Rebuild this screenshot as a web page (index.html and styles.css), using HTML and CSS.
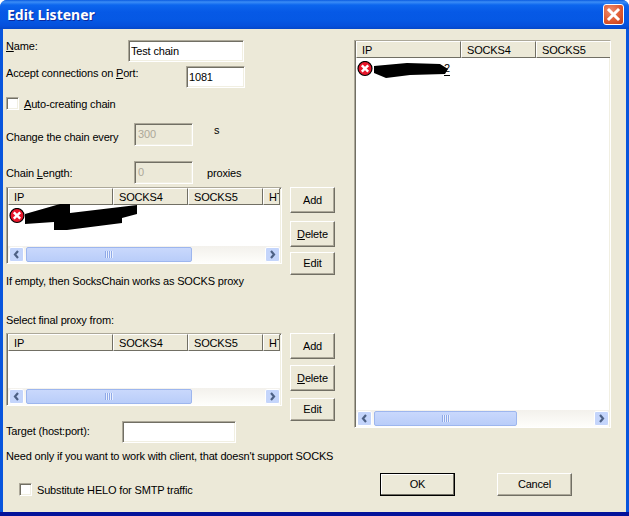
FILE: index.html
```html
<!DOCTYPE html>
<html lang="en">
<head>
<meta charset="utf-8">
<title>Edit Listener</title>
<link rel="stylesheet" href="styles.css">
</head>
<body>
<div class="window">
  <div class="titlebar">
    <span class="title">Edit Listener</span>
    <span class="close"><svg width="21" height="21" viewBox="0 0 21 21"><path d="M6 6l9 9M15 6l-9 9" stroke="#fff" stroke-width="3" stroke-linecap="square" fill="none"/></svg></span>
  </div>
  <div class="client">
    <div class="left">
      <div class="row row-name"><label class="lbl lbl-name"><u>N</u>ame:</label><div class="field field-name">Test chain</div></div>
      <div class="row row-port"><label class="lbl lbl-port"><span>Accept connections on <u>P</u>ort:</span></label><div class="field field-port">1081</div></div>
      <div class="row row-auto"><span class="check"></span><label class="lbl check-label"><u>A</u>uto-creating chain</label></div>
      <div class="row row-change"><label class="lbl lbl-opt lbl-low">Change the chain every</label><div class="field field-off">300</div><span class="unit unit-s">s</span></div>
      <div class="row row-length"><label class="lbl lbl-opt lbl-mid">Chain <u>L</u>ength:</label><div class="field field-off">0</div><span class="unit unit-p">proxies</span></div>

      <div class="row list-row">
        <div class="list list-small">
          <div class="head">
            <span class="col col-ip">IP</span><span class="col col-s">SOCKS4</span><span class="col col-s">SOCKS5</span><span class="col col-h">HT</span>
          </div>
          <div class="rows">
            <svg class="err" width="16" height="16" viewBox="0 0 16 16"><circle cx="8" cy="7.500" r="7" fill="#e8172b" stroke="#000" stroke-width="1.200"/><path d="M4.800 4.300l6.400 6.400M11.200 4.300l-6.400 6.400" stroke="#fff" stroke-width="2.400" fill="none"/></svg>
          </div>
          <svg class="scrawl scrawl-a" width="116" height="28" viewBox="0 0 116 28"><path d="M1 11 36 1h10v9L113 2v9L98 15v5L43 27H30v-8L1 21z" fill="#000"/></svg>
          <div class="hscroll">
            <span class="arrow"><svg width="15" height="15" viewBox="0 0 15 15"><path d="M9 4 6 7.500l3 3.500" stroke="#4d6185" stroke-width="2.200" fill="none"/></svg></span>
            <span class="thumb thumb-small"><i></i></span>
            <span class="track"></span>
            <span class="arrow"><svg width="15" height="15" viewBox="0 0 15 15"><path d="M6 4l3 3.500L6 11" stroke="#4d6185" stroke-width="2.200" fill="none"/></svg></span>
          </div>
        </div>
        <div class="btns">
          <button class="btn btn-tall">Add</button>
          <button class="btn btn-tall btn-delete"><u>D</u>elete</button>
          <button class="btn btn-edit">Edit</button>
        </div>
      </div>
      <p class="note note-empty">If empty, then SocksChain works as SOCKS proxy</p>
      <p class="note note-select">Select final proxy from:</p>

      <div class="row list-row list-row-final">
        <div class="list list-final">
          <div class="head">
            <span class="col col-ip">IP</span><span class="col col-s">SOCKS4</span><span class="col col-s">SOCKS5</span><span class="col col-h">HT</span>
          </div>
          <div class="rows"></div>
          <div class="hscroll">
            <span class="arrow"><svg width="15" height="15" viewBox="0 0 15 15"><path d="M9 4 6 7.500l3 3.500" stroke="#4d6185" stroke-width="2.200" fill="none"/></svg></span>
            <span class="thumb thumb-small"><i></i></span>
            <span class="track"></span>
            <span class="arrow"><svg width="15" height="15" viewBox="0 0 15 15"><path d="M6 4l3 3.500L6 11" stroke="#4d6185" stroke-width="2.200" fill="none"/></svg></span>
          </div>
        </div>
        <div class="btns btns-final">
          <button class="btn btn-add-final">Add</button>
          <button class="btn btn-tall btn-delete-final"><u>D</u>elete</button>
          <button class="btn btn-edit btn-edit-final">Edit</button>
        </div>
      </div>

      <div class="row row-target"><label class="lbl lbl-target">Target (host:port):</label><div class="field field-target"></div></div>
      <p class="note note-need">Need only if you want to work with client, that doesn't support SOCKS</p>
      <div class="row row-helo"><span class="check"></span><label class="lbl helo-label">Substitute HELO for SMTP traffic</label></div>
    </div>

    <div class="right">
      <div class="list list-big">
        <div class="head">
          <span class="col col-ip">IP</span><span class="col col-s">SOCKS4</span><span class="col col-s">SOCKS5</span>
        </div>
        <div class="rows rows-big">
          <svg class="err" width="16" height="16" viewBox="0 0 16 16"><circle cx="8" cy="7.500" r="7" fill="#e8172b" stroke="#000" stroke-width="1.200"/><path d="M4.800 4.300l6.400 6.400M11.200 4.300l-6.400 6.400" stroke="#fff" stroke-width="2.400" fill="none"/></svg>
          <span class="cell-tail">2</span>
        </div>
        <svg class="scrawl scrawl-b" width="76" height="16" viewBox="0 0 76 16"><path d="M1 4 34 1l33 1 8 5-3 5-35 1-24 3-12-5z" fill="#000"/></svg>
        <div class="hscroll">
          <span class="arrow"><svg width="15" height="15" viewBox="0 0 15 15"><path d="M9 4 6 7.500l3 3.500" stroke="#4d6185" stroke-width="2.200" fill="none"/></svg></span>
          <span class="thumb thumb-big"><i></i></span>
          <span class="track"></span>
          <span class="arrow"><svg width="15" height="15" viewBox="0 0 15 15"><path d="M6 4l3 3.500L6 11" stroke="#4d6185" stroke-width="2.200" fill="none"/></svg></span>
        </div>
      </div>
      <div class="footer">
        <button class="btn btn-foot btn-default">OK</button>
        <button class="btn btn-foot">Cancel</button>
      </div>
    </div>
  </div>
</div>
</body>
</html>
```

FILE: styles.css
```css
* { box-sizing: border-box; }
html, body { margin: 0; padding: 0; }
body { width: 629px; height: 516px; background: #fff; overflow: hidden; font: 11px/13px "Liberation Sans", Arial, sans-serif; letter-spacing: -.17px; color: #000; }
u { text-decoration: underline; }
p { margin: 0; }

.window { width: 629px; height: 516px; display: flex; flex-direction: column; border-radius: 7px 7px 0 0; overflow: hidden; background: #0855dd; border-bottom: 4px solid #04129a; }
.titlebar { height: 29px; flex: none; display: flex; align-items: center; justify-content: space-between; padding: 0 5px 0 7px; background: linear-gradient(#0a5be0 0, #3b8df6 2px, #0c66ee 5px, #0659e6 12px, #0558e4 20px, #0550dc 26px, #0447c8 29px); }
.title { font: bold 14px/16px "Noto Sans", sans-serif; letter-spacing: 0; color: #fff; text-shadow: 1px 1px 0 #0d2a9c; }
.close { width: 21px; height: 21px; border: 1px solid #fff; border-radius: 3px; background: radial-gradient(circle at 35% 30%, #ef8d6f, #df5a32 55%, #c23a17); display: block; }
.close svg { display: block; margin: -1px; }

.client { flex: 1; display: flex; background: #ece9d8; margin: 0 3px; }
.left { width: 332px; flex: none; padding-left: 3px; }
.right { flex: 1; padding: 11px 0 0 19px; }

.row { display: flex; }
.lbl { display: block; flex: none; white-space: nowrap; }
.field { flex: none; height: 22px; background: #fff; border: 1px solid; border-color: #aca899 #fff #fff #aca899; box-shadow: inset 1px 1px 0 #716f64, inset -1px -1px 0 #f1efe2; padding: 3px 0 0 2px; line-height: 14px; }

.row-name { margin-top: 11px; height: 22px; }
.lbl-name { width: 122px; }
.field-name { width: 116px; }
.row-port { margin-top: 4px; height: 22px; }
.lbl-port { width: 180px; padding-top: 1px; }
.field-port { width: 59px; }
.row-auto { margin-top: 9px; height: 13px; }
.check { flex: none; width: 13px; height: 13px; background: #fff; border: 1px solid; border-color: #aca899 #fff #fff #aca899; box-shadow: inset 1px 1px 0 #716f64, inset -1px -1px 0 #f1efe2; }
.check-label { margin-left: 5px; padding-top: 1px; }

.row-change { margin-top: 13px; height: 23px; }
.row-length { margin-top: 15px; height: 23px; }
.lbl-opt { width: 128px; }
.lbl-low { padding-top: 8px; }
.lbl-mid { padding-top: 6px; }
.field-off { width: 59px; height: 23px; padding-left: 3px; background: #ece9d8; color: #aca899; }
.unit { flex: none; }
.unit-s { margin-left: 21px; padding-top: 1px; }
.unit-p { margin-left: 14px; padding-top: 6px; }

.list-row { margin-top: 3px; height: 88px; gap: 8px; align-items: flex-start; }
.list { position: relative; flex: none; background: #fff; border: 1px solid; border-color: #aca899 #fff #fff #aca899; box-shadow: inset 1px 1px 0 #716f64, inset -1px -1px 0 #f1efe2; padding: 0 1px; display: flex; flex-direction: column; overflow: hidden; }
.list-small { width: 276px; height: 77px; }
.list-final { width: 276px; height: 73px; }
.list-big { width: 257px; height: 388px; }

.head { flex: none; height: 17px; display: flex; }
.col { flex: none; height: 17px; padding: 2px 0 0 5px; background: #ece9d8; border: 1px solid; border-color: #fff #716f64 #716f64 #fff; white-space: nowrap; overflow: hidden; }
.col-ip { width: 105px; }
.col-s { width: 75px; }
.col-h { flex: 1; }
.rows { flex: 1; min-height: 0; padding: 3px 0 0 1px; display: flex; }
.err { flex: none; display: block; }
.cell-tail { margin-left: 71px; padding-top: 1px; border-bottom: 1px solid #000; height: 15px; }

.scrawl { position: absolute; }
.scrawl-a { left: 17px; top: 15px; }
.scrawl-b { left: 18px; top: 21px; }

.hscroll { flex: none; height: 17px; padding: 1px 0 1px 1px; display: flex; align-items: stretch; background: linear-gradient(#f3f1ec, #fefefb); }
.arrow { flex: none; width: 15px; height: 15px; border-radius: 2px; background: #c4d5fb; border: 1px solid #fff; display: block; }
.arrow svg { display: block; margin: -1px; }
.thumb { flex: none; margin-left: 2px; height: 15px; background: linear-gradient(#c9d8fc, #b9cdf9); border: 1px solid #9db6ee; border-radius: 2px; display: flex; align-items: center; justify-content: center; }
.thumb i { display: block; width: 8px; height: 7px; background: repeating-linear-gradient(90deg, #8fa9e8 0 1px, #e8effe 1px 2px); }
.thumb-small { width: 166px; }
.thumb-big { width: 143px; }
.track { flex: 1; }

.btns { flex: none; width: 45px; display: flex; flex-direction: column; }
.btn { display: block; font: inherit; letter-spacing: inherit; color: #000; background: #ece9d8; padding: 0; border: 1px solid; border-color: #fff #716f64 #716f64 #fff; box-shadow: inset -1px -1px 0 #aca899; text-align: center; }
.btn-tall { height: 26px; }
.btn-delete { margin-top: 8px; }
.btn-edit { height: 23px; margin-top: 5px; }
.btn-add-final { height: 26px; }
.btn-delete-final { margin-top: 6px; }
.btn-edit-final { margin-top: 7px; }

.note { white-space: nowrap; }
.note-empty { margin-top: 0; }
.note-select { margin-top: 26px; }
.list-row-final { margin-top: 6px; }

.row-target { height: 22px; }
.lbl-target { width: 116px; padding-top: 4px; }
.field-target { width: 114px; }
.note-need { margin-top: 7px; }
.row-helo { margin-top: 20px; padding-left: 13px; height: 13px; }
.helo-label { margin-left: 5px; padding-top: 1px; }

.footer { display: flex; gap: 42px; padding: 45px 0 0 26px; }
.btn-foot { width: 75px; height: 23px; }
.btn-default { border: 1px solid #000; box-shadow: inset -1px -1px 0 #716f64, inset 1px 1px 0 #fff; }
```
